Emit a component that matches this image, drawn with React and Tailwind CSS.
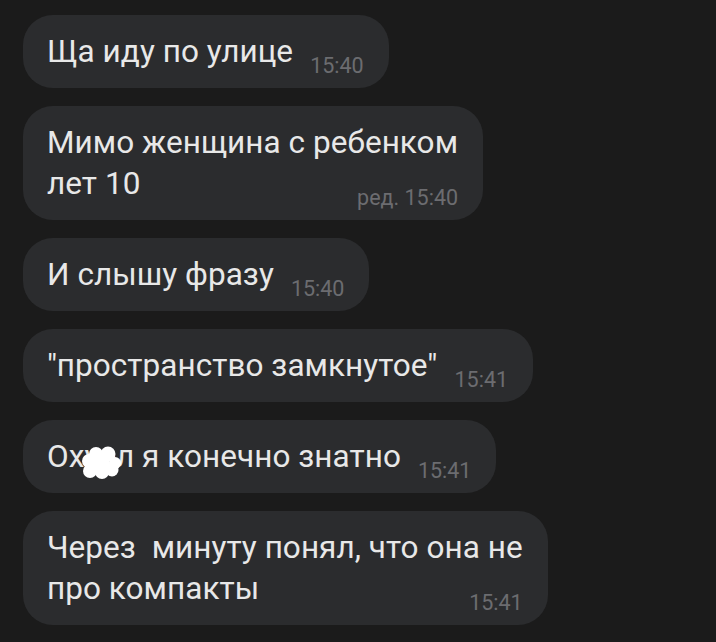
import React from 'react';

// Chat bubbles, dark theme. Each message is a list of lines; the
// timestamp sits on the last line, pushed to the right edge.
const messages = [
  { lines: ['Ща иду по улице'], time: '15:40' },
  { lines: ['Мимо женщина с ребенком', 'лет 10'], time: 'ред. 15:40' },
  { lines: ['И слышу фразу'], time: '15:40' },
  { lines: ['"пространство замкнутое"'], time: '15:41' },
  { lines: ['censored'], time: '15:41' },
  { lines: ['Через\u00a0 минуту понял, что она не', 'про компакты'], time: '15:41' },
];

function Blob() {
  return (
    <svg
      className="absolute left-[-3px] top-[10px] w-[40px] h-[33px]"
      viewBox="0 0 40 33"
      fill="#ffffff"
    >
      <circle cx="15" cy="8" r="7" />
      <circle cx="27" cy="8" r="7.5" />
      <circle cx="34" cy="17" r="6" />
      <circle cx="8" cy="15" r="7" />
      <circle cx="20" cy="17" r="9" />
      <circle cx="9" cy="25" r="7" />
      <circle cx="21" cy="26" r="7" />
      <circle cx="31" cy="24" r="6.5" />
    </svg>
  );
}

function LineText({ text }) {
  if (text !== 'censored') return <span>{text}</span>;
  return (
    <span>
      Ох
      <span className="relative inline-block">
        уе
        <Blob />
      </span>
      л я конечно знатно
    </span>
  );
}

function Bubble({ lines, time }) {
  const last = lines[lines.length - 1];
  const head = lines.slice(0, -1);
  return (
    <div className="self-start bg-[#2b2c2e] rounded-[30px] pl-[24px] pr-[25px] py-[16px] text-[#e8e8e8] text-[31.5px] tracking-[0.05px] leading-[41px]">
      {head.map((l, i) => (
        <div key={i} className="whitespace-pre">
          {l}
        </div>
      ))}
      <div className="flex justify-between items-baseline gap-[17px] whitespace-pre">
        <LineText text={last} />
        <span className="relative top-[11px] text-[21.5px] tracking-normal leading-[25px] text-[#6c6c70]">{time}</span>
      </div>
    </div>
  );
}

export default function App() {
  return (
    <div
      className="w-[716px] h-[642px] bg-[#1b1b1b] overflow-hidden flex flex-col gap-[18px] pl-[23px] pt-[15px]"
      style={{ fontFamily: 'Roboto, "Liberation Sans", sans-serif' }}
    >
      {messages.map((m, i) => (
        <Bubble key={i} lines={m.lines} time={m.time} />
      ))}
    </div>
  );
}
